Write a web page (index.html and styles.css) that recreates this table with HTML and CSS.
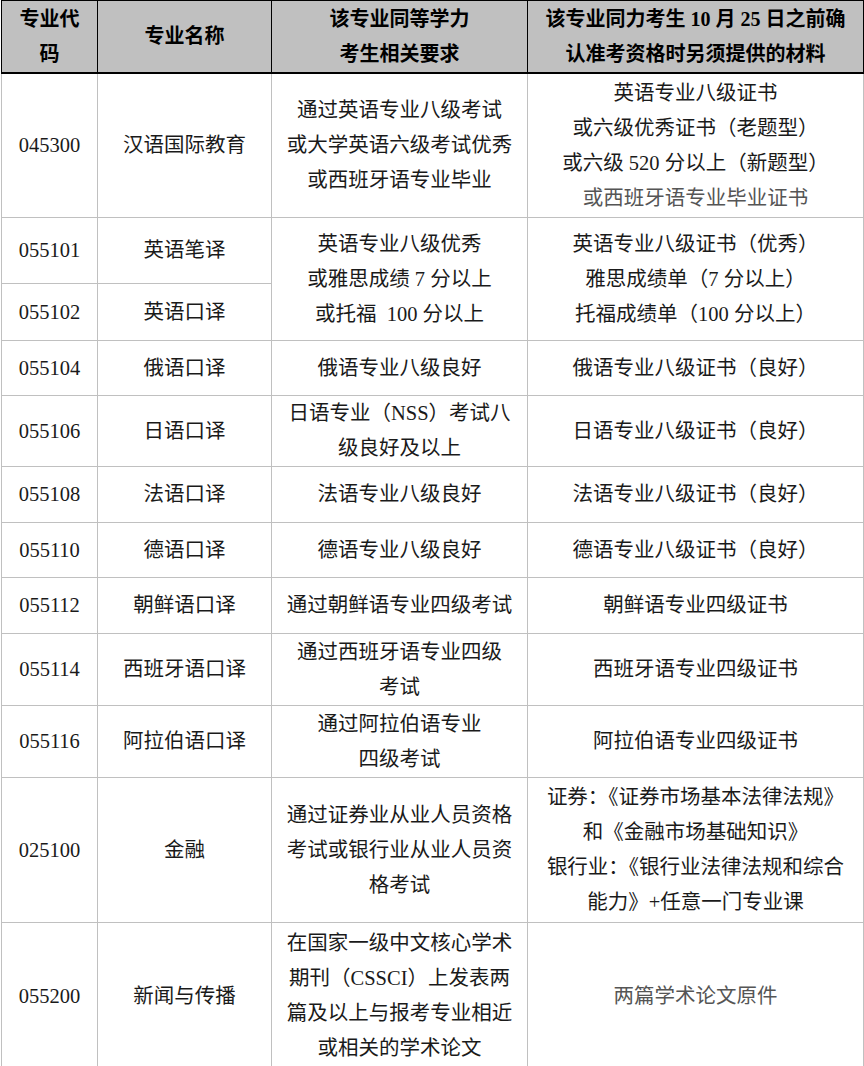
FILE: index.html
```html
<!DOCTYPE html>
<html lang="zh-CN">
<head>
<meta charset="utf-8">
<title>专业同等学力要求</title>
<link rel="stylesheet" href="styles.css">
</head>
<body>
<table class="req">
  <colgroup>
    <col class="c1"><col class="c2"><col class="c3"><col class="c4">
  </colgroup>
  <thead>
    <tr class="h">
      <th>专业代<br>码</th>
      <th>专业名称</th>
      <th>该专业同等学力<br>考生相关要求</th>
      <th>该专业同力考生 10 月 25 日之前确<br>认准考资格时另须提供的材料</th>
    </tr>
  </thead>
  <tbody>
    <tr class="r144">
      <td>045300</td>
      <td>汉语国际教育</td>
      <td>通过英语专业八级考试<br>或大学英语六级考试优秀<br>或西班牙语专业毕业</td>
      <td>英语专业八级证书<br>或六级优秀证书（老题型）<br>或六级 520 分以上（新题型）<br><span class="soft">或西班牙语专业毕业证书</span></td>
    </tr>
    <tr class="r66">
      <td>055101</td>
      <td>英语笔译</td>
      <td rowspan="2">英语专业八级优秀<br>或雅思成绩 7 分以上<br>或托福&nbsp; 100 分以上</td>
      <td rowspan="2">英语专业八级证书（优秀）<br>雅思成绩单（7 分以上）<br>托福成绩单（100 分以上）</td>
    </tr>
    <tr class="r57">
      <td>055102</td>
      <td>英语口译</td>
    </tr>
    <tr class="r55">
      <td>055104</td>
      <td>俄语口译</td>
      <td>俄语专业八级良好</td>
      <td>俄语专业八级证书（良好）</td>
    </tr>
    <tr class="r71">
      <td>055106</td>
      <td>日语口译</td>
      <td>日语专业（NSS）考试八<br>级良好及以上</td>
      <td>日语专业八级证书（良好）</td>
    </tr>
    <tr class="r56">
      <td>055108</td>
      <td>法语口译</td>
      <td>法语专业八级良好</td>
      <td>法语专业八级证书（良好）</td>
    </tr>
    <tr class="r55">
      <td>055110</td>
      <td>德语口译</td>
      <td>德语专业八级良好</td>
      <td>德语专业八级证书（良好）</td>
    </tr>
    <tr class="r56">
      <td>055112</td>
      <td>朝鲜语口译</td>
      <td>通过朝鲜语专业四级考试</td>
      <td>朝鲜语专业四级证书</td>
    </tr>
    <tr class="r72">
      <td>055114</td>
      <td>西班牙语口译</td>
      <td>通过西班牙语专业四级<br>考试</td>
      <td>西班牙语专业四级证书</td>
    </tr>
    <tr class="r72">
      <td>055116</td>
      <td>阿拉伯语口译</td>
      <td>通过阿拉伯语专业<br>四级考试</td>
      <td>阿拉伯语专业四级证书</td>
    </tr>
    <tr class="r145">
      <td>025100</td>
      <td>金融</td>
      <td>通过证券业从业人员资格<br>考试或银行业从业人员资<br>格考试</td>
      <td>证券：《证券市场基本法律法规》<br>和《金融市场基础知识》<br>银行业：《银行业法律法规和综合<br>能力》+任意一门专业课</td>
    </tr>
    <tr class="r143">
      <td>055200</td>
      <td>新闻与传播</td>
      <td>在国家一级中文核心学术<br>期刊（CSSCI）上发表两<br>篇及以上与报考专业相近<br>或相关的学术论文</td>
      <td><span class="soft">两篇学术论文原件</span></td>
    </tr>
  </tbody>
</table>
</body>
</html>
```

FILE: styles.css
```css
html, body {
  margin: 0;
  padding: 0;
  background: #ffffff;
}

body {
  padding: 0 0 0 1px;
  font-family: "Liberation Serif", "Noto Sans CJK SC", serif;
  color: #1a1a1a;
}

.req {
  border-collapse: collapse;
  table-layout: fixed;
  width: 862px;
}

.c1 { width: 96px; }
.c2 { width: 174px; }
.c3 { width: 256px; }
.c4 { width: 336px; }

.req th {
  background: #c0c0c0;
  border: 1px solid #000000;
  border-bottom: 2px solid #000000;
  height: 71px;
  padding: 0;
  font-size: 20px;
  font-weight: 700;
  line-height: 35px;
  color: #000000;
  text-align: center;
  vertical-align: middle;
  white-space: nowrap;
}

.req td {
  border: 1px solid #c0c0c0;
  padding: 0;
  font-size: 20.5px;
  line-height: 35px;
  text-align: center;
  vertical-align: middle;
  white-space: nowrap;
}

.r144 td { height: 143px; }
.r66 td { height: 65px; }
.r57 td { height: 56px; }
.r55 td { height: 54px; }
.r56 td { height: 55px; }
.r71 td { height: 70px; }
.r72 td { height: 71px; }
.r145 td { height: 144px; }
.r143 td { height: 146px; }

.soft {
  color: #555555;
}
```
